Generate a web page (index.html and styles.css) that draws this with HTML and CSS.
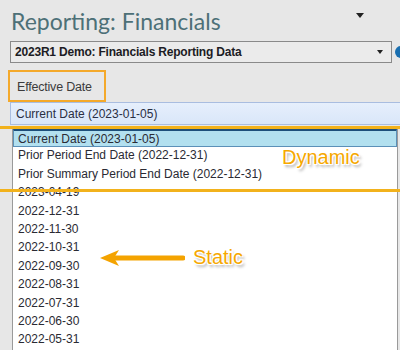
FILE: index.html
```html
<!DOCTYPE html>
<html lang="en">
<head>
    <meta charset="UTF-8">
    <title>Reporting: Financials</title>
    <link rel="stylesheet" href="styles.css">
</head>
<body>
    <div class="panel">
        <div class="title-row">
            <h1 class="title">Reporting: Financials</h1>
            <span class="title-caret"></span>
        </div>

        <div class="combo-row">
            <div class="combo">
                <span class="combo-text">2023R1 Demo: Financials Reporting Data</span>
                <span class="caret"></span>
            </div>
            <span class="info-dot"></span>
        </div>

        <div class="field-label">Effective Date</div>

        <div class="field-value">Current Date (2023-01-05)</div>

        <ul class="date-list">
            <li class="selected">Current Date (2023-01-05)</li>
            <li>Prior Period End Date (2022-12-31)</li>
            <li>Prior Summary Period End Date (2022-12-31)</li>
            <li>2023-04-19</li>
            <li>2022-12-31</li>
            <li>2022-11-30</li>
            <li>2022-10-31</li>
            <li>2022-09-30</li>
            <li>2022-08-31</li>
            <li>2022-07-31</li>
            <li>2022-06-30</li>
            <li>2022-05-31</li>
        </ul>

        <!-- annotations drawn over the screenshot -->
        <div class="mark-line line-top"></div>
        <div class="mark-line line-bottom"></div>
        <div class="note note-dynamic">Dynamic</div>
        <div class="note-static">
            <svg class="arrow" width="86" height="18" viewBox="0 0 86 18">
                <path d="M84 9 H16" stroke="#f4a300" stroke-width="5" stroke-linecap="round"/>
                <path d="M1 9 L20 1 L15 9 L20 17 Z" fill="#f4a300"/>
            </svg>
            <span class="note">Static</span>
        </div>
    </div>
</body>
</html>
```

FILE: styles.css
```css
* {
    margin: 0;
    padding: 0;
    box-sizing: border-box;
}

body {
    width: 400px;
    height: 350px;
    overflow: hidden;
    background: #e7e7e7;
    font-family: 'Liberation Sans', Arial, sans-serif;
    font-size: 12px;
    color: #2a2a33;
}

.panel {
    position: relative;
    display: flex;
    flex-direction: column;
    height: 350px;
}

.title-row {
    display: flex;
    align-items: center;
    height: 40px;
    padding: 2px 0 0 11px;
}

.title {
    font-family: Lato, sans-serif;
    font-weight: 400;
    font-size: 23px;
    color: #4d7077;
    flex: 1;
}

.title-caret {
    width: 0;
    height: 0;
    border-left: 4px solid transparent;
    border-right: 4px solid transparent;
    border-top: 5px solid #222;
    margin: -12px 36px 0 0;
}

.combo-row {
    display: flex;
    align-items: center;
    gap: 3px;
    height: 24px;
}

.combo {
    display: flex;
    align-items: center;
    flex: none;
    width: 382px;
    height: 22px;
    margin-left: 10px;
    padding: 0 8px 0 4px;
    border: 1px solid #8a8a8a;
    background: #ebebeb;
}

.combo-text {
    flex: 1;
    font-size: 12px;
    font-weight: bold;
    color: #1c1c24;
    letter-spacing: -0.2px;
}

.caret {
    width: 0;
    height: 0;
    border-left: 3.5px solid transparent;
    border-right: 3.5px solid transparent;
    border-top: 4px solid #222;
}

.info-dot {
    width: 12px;
    height: 12px;
    border-radius: 50%;
    background: #1a6fb0;
    flex: none;
}

.field-label {
    width: 98px;
    height: 32px;
    margin: 6px 0 0 8px;
    padding: 8px 0 0 7px;
    border: 2px solid #f4a92b;
    font-size: 12.5px;
    color: #3b3b3b;
    letter-spacing: -0.2px;
}

.field-value {
    height: 23px;
    margin-left: 10px;
    padding: 4px 0 0 5px;
    border: 1px solid #a9bde0;
    border-right: none;
    background: linear-gradient(#e6effc, #d9e6f9);
    color: #2a2f44;
}

.date-list {
    list-style: none;
    width: 386px;
    margin: 4px 0 0 12px;
    flex: 1;
    background: #fff;
    border-left: 1px solid #9a9a9a;
    border-right: 1px solid #9a9a9a;
}

.date-list li {
    height: 18.4px;
    line-height: 17px;
    padding-left: 5px;
    white-space: nowrap;
}

.date-list li.selected {
    background: #b2e0ef;
    border: 1px solid #5b90b8;
    border-top: 2px solid #1d4f7a;
    padding-left: 4px;
}

.mark-line {
    position: absolute;
    left: 0;
    width: 400px;
    height: 3px;
    background: #f2b21c;
}

.line-top {
    top: 126px;
}

.line-bottom {
    top: 189px;
}

.note {
    font-family: 'Liberation Sans', Arial, sans-serif;
    font-size: 20px;
    color: #f6a800;
    text-shadow: 1px 1px 0 #fff, -1px -1px 0 #fff, 1px -1px 0 #fff, -1px 1px 0 #fff, 2px 3px 3px rgba(0, 0, 0, 0.35);
}

.note-dynamic {
    position: absolute;
    left: 282px;
    top: 146px;
}

.note-static {
    position: absolute;
    left: 99px;
    top: 246px;
    display: flex;
    align-items: center;
    gap: 8px;
}
```
